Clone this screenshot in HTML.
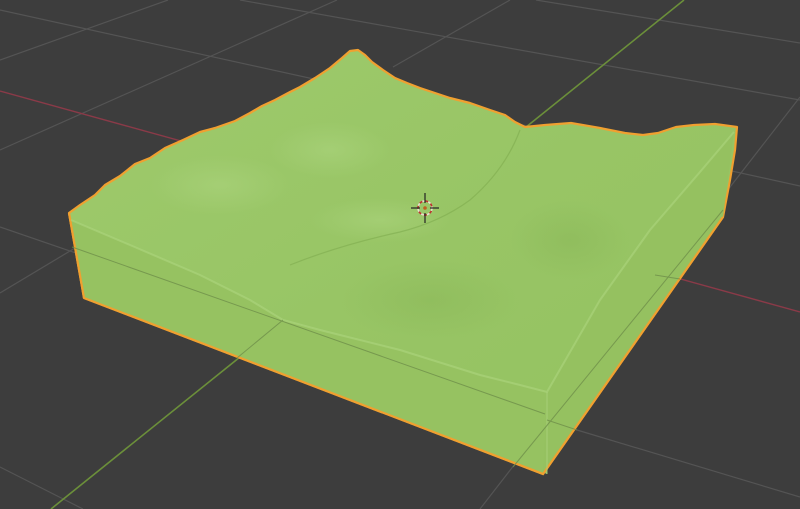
<!DOCTYPE html>
<html><head><meta charset="utf-8"><style>
html,body{margin:0;padding:0;background:#3d3d3d;overflow:hidden}
svg{display:block}
</style></head><body>
<svg width="800" height="509" viewBox="0 0 800 509" xmlns="http://www.w3.org/2000/svg">
<defs>
<linearGradient id="top" x1="0" y1="0" x2="1" y2="1">
<stop offset="0" stop-color="#9eca6c"/><stop offset="0.5" stop-color="#98c565"/><stop offset="1" stop-color="#94c260"/>
</linearGradient>
<radialGradient id="hl1" cx="0.5" cy="0.5" r="0.5"><stop offset="0" stop-color="#aed681" stop-opacity="0.5"/><stop offset="1" stop-color="#aed681" stop-opacity="0"/></radialGradient>
<radialGradient id="sh1" cx="0.5" cy="0.5" r="0.5"><stop offset="0" stop-color="#88b556" stop-opacity="0.45"/><stop offset="1" stop-color="#88b556" stop-opacity="0"/></radialGradient>
</defs>
<rect width="800" height="509" fill="#3d3d3d"/>
<g stroke="#545454" stroke-width="1.2" fill="none">
<line x1="0" y1="10" x2="800" y2="186"/>
<line x1="240" y1="0" x2="800" y2="100"/>
<line x1="536" y1="0" x2="800" y2="43"/>
<line x1="0" y1="227" x2="545" y2="414"/>
<line x1="0" y1="467" x2="83" y2="509"/>
<line x1="577" y1="430" x2="800" y2="497"/>
<line x1="0" y1="60" x2="168" y2="0"/>
<line x1="0" y1="150" x2="337" y2="0"/>
<line x1="0" y1="293" x2="80" y2="245"/>
<line x1="510" y1="0" x2="393" y2="67"/>
<line x1="800" y1="97" x2="480" y2="509"/>
</g>
<line x1="0" y1="91" x2="800" y2="312" stroke="#8a3a48" stroke-width="1.4"/>
<line x1="684" y1="0" x2="51" y2="509" stroke="#6b8f3a" stroke-width="1.6"/>
<path d="M69,213 L80,205 95,195 105,185 120,176 135,164 150,158 165,148 183,140 200,132 215,128 235,121 250,113 262,106 275,100 290,92 300,87 315,78 330,68 342,58 350,51 358,50 365,55 372,62 383,70 395,78 407,83 420,88 435,93 450,98 470,103 490,110 505,115 515,122 525,127 545,125 571,123 600,128 625,133 643,135 658,133 676,127 694,125 715,124 737,127 735,150 730,180 723,217 543,474 84,298 Z" fill="url(#top)" stroke="#f0a030" stroke-width="2.2" stroke-linejoin="round"/>
<path d="M71,220 L130,245 200,275 250,300 283,320 320,330 400,350 480,375 520,385 547,392 547,474 84,298 Z" fill="#96c261"/>
<path d="M547,392 L600,300 650,230 700,172 734,132 723,217 543,474 Z" fill="#95c160"/>
<path d="M84,298 L543,474 723,217" fill="none" stroke="#f0a030" stroke-width="2.2"/>
<path d="M69,213 L84,298" stroke="#f0a030" stroke-width="2.2"/>
<ellipse cx="220" cy="185" rx="70" ry="30" fill="url(#hl1)"/>
<ellipse cx="330" cy="150" rx="60" ry="28" fill="url(#hl1)"/>
<ellipse cx="380" cy="220" rx="70" ry="22" fill="url(#hl1)"/>
<ellipse cx="570" cy="240" rx="60" ry="40" fill="url(#sh1)"/>
<ellipse cx="430" cy="300" rx="90" ry="40" fill="url(#sh1)"/>
<path d="M71,220 L130,245 200,275 250,300 283,320 320,330 400,350 480,375 520,385 547,392 600,300 650,230 700,172 734,132" fill="none" stroke="#aed57f" stroke-width="2" opacity="0.6"/>
<path d="M520,130 Q505,170 470,200 Q440,222 400,232 Q340,245 290,265" fill="none" stroke="#7fab4e" stroke-width="1.2" opacity="0.6"/>
<path d="M547,392 L547,474" stroke="#a8d07a" stroke-width="1.5" opacity="0.6"/>
<g stroke="#6f8f4a" stroke-width="1" opacity="0.8">
<line x1="72" y1="247" x2="545" y2="414"/>
<line x1="547" y1="420" x2="577" y2="430"/>
<line x1="237" y1="358" x2="283" y2="320"/>
<line x1="723" y1="210" x2="513" y2="467"/>
<line x1="655" y1="275" x2="680" y2="279"/>
</g>
<g transform="translate(425,208)">
<circle r="7" fill="none" stroke="#e8e0d0" stroke-width="1.6" stroke-dasharray="3 3"/>
<circle r="7" fill="none" stroke="#c03030" stroke-width="1.6" stroke-dasharray="3 3" stroke-dashoffset="3"/>
<line x1="-14" y1="0" x2="-5" y2="0" stroke="#222" stroke-width="1.2"/>
<line x1="5" y1="0" x2="14" y2="0" stroke="#222" stroke-width="1.2"/>
<line x1="0" y1="-15" x2="0" y2="-5" stroke="#222" stroke-width="1.2"/>
<line x1="0" y1="5" x2="0" y2="15" stroke="#222" stroke-width="1.2"/>
<circle r="1.8" fill="#c06020"/>
</g>
</svg>
</body></html>
